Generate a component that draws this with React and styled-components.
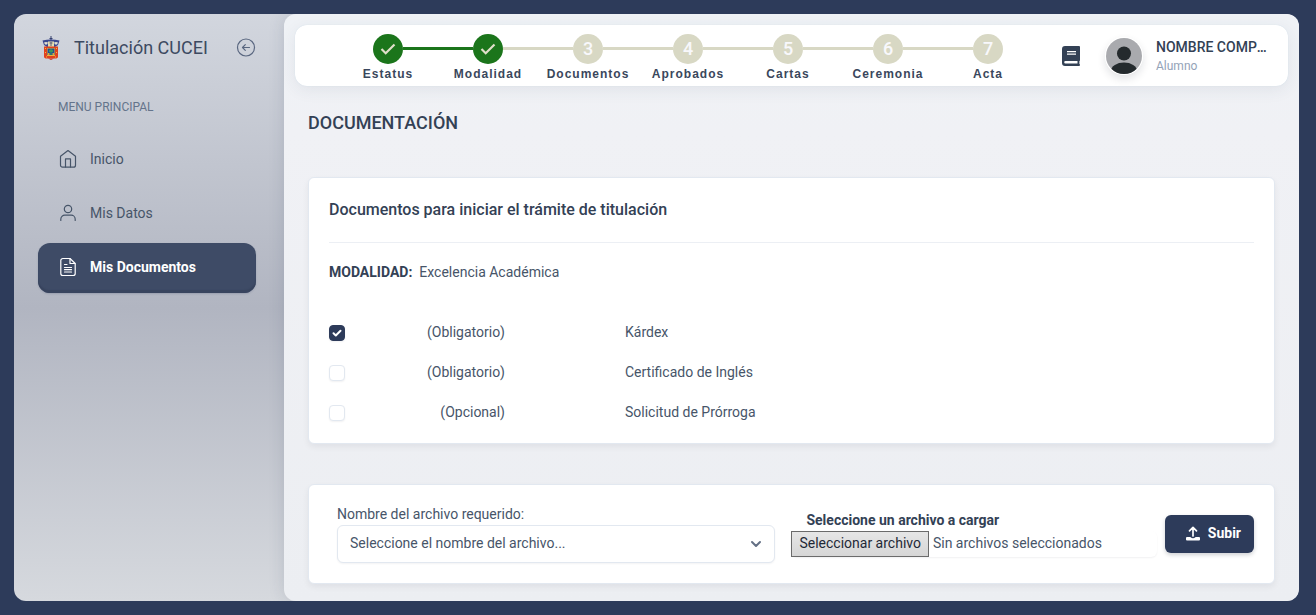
import React, { useRef, useState } from "react";
import styled, { createGlobalStyle } from "styled-components";

const GlobalStyle = createGlobalStyle`
  * {
    box-sizing: border-box;
  }
  body {
    margin: 0;
    background: #2d3b5a;
    color: #475569;
    font-family: Roboto, "Liberation Sans", sans-serif;
    font-size: 14px;
    line-height: 20px;
  }
  button, input, select {
    font: inherit;
    color: inherit;
  }
  h1, h2, p, ul, ol {
    margin: 0;
    padding: 0;
  }
`;

const Page = styled.div`
  min-height: 100vh;
  padding: 14px 17px 14px 14px;
  display: flex;
`;

const Shell = styled.div`
  flex: 1;
  min-width: 0;
  display: flex;
  border-radius: 12px;
  overflow: hidden;
  background: linear-gradient(180deg, #d2d6de 0%, #b1b5c1 50%, #d6d9de 100%);
`;

/* ---------- Menú lateral ---------- */

const Sidebar = styled.aside`
  flex: none;
  width: 270px;
  padding: 21px 28px 24px 24px;
`;

const Brand = styled.div`
  display: flex;
  align-items: center;
  height: 26px;
  padding-left: 4px;
`;

const BrandName = styled.span`
  flex: 1;
  margin-left: 14px;
  font-size: 18px;
  line-height: 24px;
  color: #3d4a61;
`;

const CollapseButton = styled.button`
  display: flex;
  padding: 0;
  border: none;
  background: none;
  color: #5a6780;
  cursor: pointer;
`;

const MenuTitle = styled.div`
  margin: 36px 0 18px 20px;
  font-size: 12px;
  line-height: 20px;
  color: #64748b;
`;

const Menu = styled.ul`
  list-style: none;
  display: flex;
  flex-direction: column;
  gap: 4px;
`;

const MenuLink = styled.a`
  display: flex;
  align-items: center;
  gap: 12px;
  height: 50px;
  padding: 0 20px 2px;
  border-radius: 12px;
  text-decoration: none;
  font-weight: ${(props) => (props.$active ? 700 : 400)};
  color: ${(props) => (props.$active ? "#ffffff" : "#475569")};
  background: ${(props) => (props.$active ? "#3e4b66" : "transparent")};
  box-shadow: ${(props) => (props.$active ? "inset 0 -3px 1px #38445e, 0 1px 2px rgba(45, 59, 90, 0.2)" : "none")};
`;

/* ---------- Contenido ---------- */

const Main = styled.main`
  flex: 1;
  min-width: 0;
  border-radius: 12px;
  padding: 11px 11px 17px;
  background: linear-gradient(180deg, #eff2f6 0%, #f0f1f5 20%, #eceef2 100%);
  box-shadow: 0 0 16px rgba(45, 59, 90, 0.15);
`;

const TopBar = styled.header`
  display: flex;
  align-items: center;
  height: 61px;
  padding: 0 20px 0 43px;
  border-radius: 12px;
  background: #fff;
  box-shadow: 0 4px 16px rgba(45, 59, 90, 0.08), 0 0 1px #cbdbe9;
`;

const Steps = styled.ol`
  display: flex;
  align-self: flex-start;
  padding-top: 9px;
  list-style: none;
`;

const Step = styled.li`
  position: relative;
  width: 100px;
  display: flex;
  flex-direction: column;
  align-items: center;

  &:not(:last-child)::after {
    content: "";
    position: absolute;
    top: 13px;
    left: 65px;
    width: 70px;
    height: 3px;
    background: ${(props) => (props.$linked ? "#1b751b" : "#d8d8c4")};
  }
`;

const StepCircle = styled.span`
  width: 30px;
  height: 30px;
  border-radius: 50%;
  display: flex;
  align-items: center;
  justify-content: center;
  font-size: 18px;
  font-weight: 500;
  color: #f8f8fc;
  background: ${(props) => (props.$done ? "#1b751b" : "#d8d8c4")};
`;

const StepLabel = styled.span`
  font-family: "Liberation Sans", Arial, sans-serif;
  font-size: 12px;
  font-weight: 700;
  line-height: 20px;
  letter-spacing: 1px;
  color: #3a475c;
`;

const UserArea = styled.div`
  margin-left: auto;
  display: flex;
  align-items: center;
`;

const GuideButton = styled.button`
  display: flex;
  margin-right: 25px;
  padding: 0;
  border: none;
  background: none;
  color: #334155;
  cursor: pointer;
`;

const Avatar = styled.span`
  display: flex;
  width: 38px;
  height: 38px;
  margin-right: 13px;
  border-radius: 50%;
  box-shadow: 0 4px 8px rgba(15, 23, 42, 0.12);
`;

const UserName = styled.div`
  width: 112px;
  margin-bottom: 2px;
  font-weight: 500;
  line-height: 18px;
  color: #334155;
  overflow: hidden;
  text-overflow: ellipsis;
  white-space: nowrap;
`;

const UserRole = styled.div`
  font-size: 12px;
  line-height: 16px;
  color: #94a3b8;
`;

const Content = styled.div`
  padding: 25px 13px 0;
`;

const PageTitle = styled.h1`
  margin-bottom: 42px;
  font-size: 18px;
  font-weight: 500;
  line-height: 24px;
  color: #334155;
`;

const Card = styled.section`
  border: 1px solid #e2e8f0;
  border-radius: 6px;
  background: #fff;
  box-shadow: 0 3px 6px rgba(15, 23, 42, 0.06);
`;

const DocumentsCard = styled(Card)`
  margin-bottom: 40px;
  padding: 20px 20px 11px;
`;

const CardTitle = styled.h2`
  padding-bottom: 20px;
  border-bottom: 1px solid #eceff4;
  font-size: 16px;
  font-weight: 500;
  line-height: 24px;
  color: #334155;
`;

const Modality = styled.p`
  margin: 19px 0 30px;

  strong {
    margin-right: 7px;
    font-weight: 700;
    color: #334155;
  }
`;

const DocumentList = styled.ul`
  list-style: none;
`;

const DocumentRow = styled.label`
  display: grid;
  grid-template-columns: 16px 160px 1fr;
  align-items: center;
  height: 40px;
`;

const Requirement = styled.span`
  text-align: right;
`;

const DocumentName = styled.span`
  padding-left: 120px;
`;

const Checkbox = styled.input`
  appearance: none;
  width: 16px;
  height: 16px;
  margin: 2px 0 0;
  border: 1px solid #e2e8f0;
  border-radius: 4px;
  background: #fff;
  box-shadow: 0 1px 2px rgba(15, 23, 42, 0.06);

  &:checked {
    border-color: #2d3b5a;
    background: #2d3b5a
      url("data:image/svg+xml,%3Csvg xmlns='http://www.w3.org/2000/svg' viewBox='0 0 14 14' fill='none' stroke='white' stroke-width='2' stroke-linecap='round' stroke-linejoin='round'%3E%3Cpath d='M3.5 7.3l2.3 2.2 4.7-4.7'/%3E%3C/svg%3E")
      center / 14px no-repeat;
  }
`;

const UploadCard = styled(Card)`
  padding: 19px 20px 20px 28px;
`;

const UploadForm = styled.form`
  display: flex;
  gap: 8px;
`;

const Fields = styled.div`
  flex: 1;
  display: grid;
  grid-template-columns: 6fr 5fr;
  gap: 16px;
`;

const Field = styled.div`
  min-width: 0;
`;

const FieldLabel = styled.label`
  display: block;
  line-height: 20px;
  margin-bottom: 1px;
`;

const Select = styled.select`
  appearance: none;
  display: block;
  width: 100%;
  height: 38px;
  padding: 0 36px 2px 12px;
  border: 1px solid #e2e8f0;
  border-radius: 6px;
  box-shadow: 0 1px 2px rgba(15, 23, 42, 0.05);
  background: #fff
    url("data:image/svg+xml,%3Csvg xmlns='http://www.w3.org/2000/svg' viewBox='0 0 24 24' fill='none' stroke='%23647085' stroke-width='3' stroke-linecap='round' stroke-linejoin='round'%3E%3Cpath d='M6 9l6 6 6-6'/%3E%3C/svg%3E")
    right 10px center / 16px no-repeat;
`;

const FileLabel = styled(FieldLabel)`
  margin: 6px 0 1px 15px;
  font-weight: 700;
  color: #334155;
`;

const FilePicker = styled.div`
  display: flex;
  align-items: center;
  gap: 4px;
  border-radius: 6px;
  box-shadow: 0 1px 2px rgba(15, 23, 42, 0.06);
`;

const FileButton = styled.button`
  height: 26px;
  padding: 0 7px 2px;
  border: 1px solid #6b6b6b;
  background: linear-gradient(180deg, #e6e6e6, #d6d6d6);
  color: #1f2937;
  white-space: nowrap;
`;

const FileName = styled.span`
  padding-bottom: 2px;
  overflow: hidden;
  text-overflow: ellipsis;
  white-space: nowrap;
`;

const SubmitButton = styled.button`
  display: flex;
  align-items: center;
  gap: 7px;
  height: 38px;
  margin-top: 11px;
  padding: 0 13px 2px 20px;
  border: none;
  border-radius: 6px;
  background: #2d3b5a;
  color: #fff;
  font-weight: 700;
  box-shadow: 0 2px 4px rgba(15, 23, 42, 0.2);
  cursor: pointer;
`;

/* ---------- Iconos ---------- */

const Crest = () => (
  <svg width="18" height="24" viewBox="0 0 18 24" aria-hidden="true">
    <path d="M8.500 0h1v2h1v1h-1v2h-1V3h-1V2h1z" fill="#35406f" />
    <path d="M0.500 4.500Q9 2.500 17.500 4.500L16 9l-3 2H5L2 9z" fill="#3b4990" />
    <path d="M2 6.500q2-1 4 0l-1 2H3zM12 6.500q2-1 4 0l-1 2h-2z" fill="#e3e2d4" />
    <path d="M6 5.500h6V11H6z" fill="#e4dcae" />
    <path d="M7.500 7h3M9 6v4" stroke="#5a5f7c" strokeWidth="1" />
    <path d="M2 10.500h14V20.500q0 2-3 2H5q-3 0-3-2z" fill="#e0421f" />
    <path d="M3 12h1v1H3zM14 12h1v1h-1zM3 16h1v1H3zM14 16h1v1h-1zM4 20.500h1v1H4zM13 20.500h1v1h-1z" fill="#f2bf3a" />
    <path d="M5 12h8v8H5z" fill="#e9b63e" />
    <path d="M5.500 12.500h7v6.500h-7z" fill="#244f93" />
    <path d="M7 14.500q2-2.500 4 0V16H9.500v3h-1v-3H7z" fill="#3b9b58" />
    <path d="M6 17h1.500v2H6zM10.500 17H12v2h-1.500z" fill="#d8a93b" />
    <path d="M6 22.500h6L9 24z" fill="#c93823" />
  </svg>
);

const BackIcon = () => (
  <svg width="20" height="20" viewBox="0 0 20 20" fill="none" stroke="currentColor" strokeWidth="1.200" strokeLinecap="round" strokeLinejoin="round">
    <circle cx="10" cy="9.500" r="8.500" />
    <path d="M13.500 9.500h-7M9.300 6.700L6.500 9.500l2.800 2.800" />
  </svg>
);

const MenuIcon = ({ children }) => (
  <svg width="20" height="20" viewBox="0 0 20 20" fill="none" stroke="currentColor" strokeWidth="1.200" strokeLinecap="round" strokeLinejoin="round" aria-hidden="true">
    {children}
  </svg>
);

const HomeIcon = () => (
  <MenuIcon>
    <path d="M2.500 7.300L10 1.500l7.500 5.800v8.900a2 2 0 0 1-2 2h-11a2 2 0 0 1-2-2z" />
    <path d="M7.500 18V9.800h5V18" />
  </MenuIcon>
);

const UserIcon = () => (
  <MenuIcon>
    <circle cx="10" cy="6" r="3.700" />
    <path d="M2.800 17.500v-1.300a4 4 0 0 1 4-4h6.400a4 4 0 0 1 4 4v1.300" />
  </MenuIcon>
);

const FileIcon = () => (
  <MenuIcon>
    <path d="M12 1.500H4.800a2 2 0 0 0-2 2v13a2 2 0 0 0 2 2h10.400a2 2 0 0 0 2-2V6.500z" />
    <path d="M12 1.500v5h5M6.500 7.500H9M6.500 10.500h7M6.500 12.700h7M6.500 15h7" />
  </MenuIcon>
);

const CheckIcon = () => (
  <svg width="16" height="14" viewBox="0 0 16 14" fill="none" stroke="#e0e0ca" strokeWidth="2.200" aria-hidden="true">
    <path d="M1.500 7l4.200 4.200L14.500 2.500" />
  </svg>
);

const BookIcon = () => (
  <svg width="18" height="20" viewBox="0 0 18 20" aria-hidden="true">
    <path
      fill="currentColor"
      fillRule="evenodd"
      d="M3 0h14q1 0 1 1v13.200q0 .5-.6.800v3q.6.200.6 1t-1 1H3q-3 0-3-3V3q0-3 3-3zM3.500 15q-1.300 0-1.300 1.300t1.300 1.300h12V15zM5 5v1.200h9V5zM5 7.500v1.200h9V7.500z"
    />
  </svg>
);

const UserPhoto = () => (
  <svg width="38" height="38" viewBox="0 0 38 38" role="img" aria-label="Foto de perfil">
    <defs>
      <clipPath id="photo">
        <circle cx="19" cy="19" r="18" />
      </clipPath>
    </defs>
    <circle cx="19" cy="19" r="19" fill="#fff" />
    <g clipPath="url(#photo)">
      <path d="M0 0h38v38H0z" fill="#a9aaae" />
      <circle cx="19" cy="16.500" r="7" fill="#242a2d" />
      <ellipse cx="19" cy="34" rx="13" ry="8.500" fill="#242a2d" />
    </g>
  </svg>
);

const UploadIcon = () => (
  <svg width="16" height="16" viewBox="0 0 16 16" fill="none" stroke="currentColor" strokeLinecap="round" strokeLinejoin="round" aria-hidden="true">
    <path d="M8 11V2.500M4.500 5.800L8 2.300l3.500 3.500" strokeWidth="1.700" />
    <path d="M2 13h3q1 1.200 3 1.200t3-1.200h3v1.500H2z" strokeWidth="2" />
  </svg>
);

const menuItems = [
  { label: "Inicio", icon: <HomeIcon /> },
  { label: "Mis Datos", icon: <UserIcon /> },
  { label: "Mis Documentos", icon: <FileIcon />, active: true },
];

const steps = ["Estatus", "Modalidad", "Documentos", "Aprobados", "Cartas", "Ceremonia", "Acta"];
const completedSteps = 2;

const documents = [
  { name: "Kárdex", requirement: "(Obligatorio)", uploaded: true },
  { name: "Certificado de Inglés", requirement: "(Obligatorio)" },
  { name: "Solicitud de Prórroga", requirement: "(Opcional)" },
];

const App = () => {
  const fileInput = useRef(null);
  const [fileName, setFileName] = useState("");

  return (
    <>
      <GlobalStyle />
      <Page>
        <Shell>
          <Sidebar>
            <Brand>
              <Crest />
              <BrandName>Titulación CUCEI</BrandName>
              <CollapseButton type="button" aria-label="Contraer menú">
                <BackIcon />
              </CollapseButton>
            </Brand>
            <MenuTitle>MENU PRINCIPAL</MenuTitle>
            <nav>
              <Menu>
                {menuItems.map((item) => (
                  <li key={item.label}>
                    <MenuLink href="#" $active={item.active}>
                      {item.icon}
                      {item.label}
                    </MenuLink>
                  </li>
                ))}
              </Menu>
            </nav>
          </Sidebar>

          <Main>
            <TopBar>
              {/* Avance del trámite */}
              <Steps>
                {steps.map((step, index) => (
                  <Step key={step} $linked={index + 1 < completedSteps}>
                    <StepCircle $done={index < completedSteps}>
                      {index < completedSteps ? <CheckIcon /> : index + 1}
                    </StepCircle>
                    <StepLabel>{step}</StepLabel>
                  </Step>
                ))}
              </Steps>
              <UserArea>
                <GuideButton type="button" aria-label="Guía">
                  <BookIcon />
                </GuideButton>
                <Avatar>
                  <UserPhoto />
                </Avatar>
                <div>
                  <UserName>NOMBRE COMPLETO</UserName>
                  <UserRole>Alumno</UserRole>
                </div>
              </UserArea>
            </TopBar>

            <Content>
              <PageTitle>DOCUMENTACIÓN</PageTitle>

              <DocumentsCard>
                <CardTitle>Documentos para iniciar el trámite de titulación</CardTitle>
                <Modality>
                  <strong>MODALIDAD:</strong>
                  Excelencia Académica
                </Modality>
                <DocumentList>
                  {documents.map((doc) => (
                    <li key={doc.name}>
                      <DocumentRow>
                        <Checkbox type="checkbox" defaultChecked={doc.uploaded} />
                        <Requirement>{doc.requirement}</Requirement>
                        <DocumentName>{doc.name}</DocumentName>
                      </DocumentRow>
                    </li>
                  ))}
                </DocumentList>
              </DocumentsCard>

              <UploadCard>
                <UploadForm onSubmit={(e) => e.preventDefault()}>
                  <Fields>
                    <Field>
                      <FieldLabel htmlFor="documento">Nombre del archivo requerido:</FieldLabel>
                      <Select id="documento" defaultValue="">
                        <option value="">Seleccione el nombre del archivo...</option>
                        {documents.map((doc) => (
                          <option key={doc.name}>{doc.name}</option>
                        ))}
                      </Select>
                    </Field>
                    <Field>
                      <FileLabel htmlFor="archivo">Seleccione un archivo a cargar</FileLabel>
                      <FilePicker>
                        <input
                          id="archivo"
                          type="file"
                          hidden
                          ref={fileInput}
                          onChange={(e) => setFileName(e.target.files[0]?.name ?? "")}
                        />
                        <FileButton type="button" onClick={() => fileInput.current.click()}>
                          Seleccionar archivo
                        </FileButton>
                        <FileName>{fileName || "Sin archivos seleccionados"}</FileName>
                      </FilePicker>
                    </Field>
                  </Fields>
                  <SubmitButton type="submit">
                    <UploadIcon />
                    Subir
                  </SubmitButton>
                </UploadForm>
              </UploadCard>
            </Content>
          </Main>
        </Shell>
      </Page>
    </>
  );
};

export default App;
